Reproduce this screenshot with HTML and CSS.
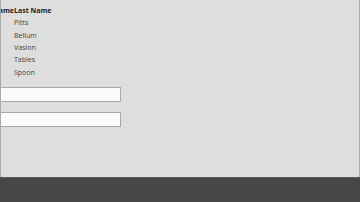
FILE: index.html
```html
<!DOCTYPE html>
<html>
<head>
<meta charset="utf-8">
<link rel="stylesheet" href="styles.css">
</head>
<body>
<div class="app">
  <div class="content">
    <div class="grid-wrap">
      <table class="grid">
        <thead>
          <tr><th class="c1">First Name</th><th class="c2">Last Name</th></tr>
        </thead>
        <tbody>
          <tr><td class="c1"></td><td class="c2">Pitts</td></tr>
          <tr><td class="c1"></td><td class="c2">Bellum</td></tr>
          <tr><td class="c1"></td><td class="c2">Vasion</td></tr>
          <tr><td class="c1"></td><td class="c2">Tables</td></tr>
          <tr><td class="c1"></td><td class="c2">Spoon</td></tr>
        </tbody>
      </table>
    </div>
    <div class="fields">
      <input class="field" type="text">
      <input class="field" type="text">
    </div>
  </div>
  <div class="bottom"></div>
</div>
</body>
</html>
```

FILE: styles.css
```css
html, body {
  margin: 0;
  padding: 0;
}
body {
  width: 360px;
  height: 202px;
  overflow: hidden;
  background: #dcdcdc;
  font-family: "Open Sans", "Noto Sans", sans-serif;
}
.app {
  display: flex;
  flex-direction: column;
  height: 202px;
}
.content {
  height: 177px;
  box-sizing: border-box;
  border-left: 1px solid #a9a9a9;
  border-right: 1px solid #a9a9a9;
  background: #dedede;
  overflow: hidden;
}
.grid-wrap {
  overflow: hidden;
  padding-top: 5px;
}
.grid {
  border-collapse: collapse;
  margin-left: -40px;
  font-size: 7px;
  color: #333;
}
.grid th {
  font-weight: 700;
  padding: 0;
  height: 12px;
  line-height: 12px;
  white-space: nowrap;
  color: #222;
}
.grid th.c1 { text-align: right; }
.grid th.c2 { text-align: left; }
.grid td {
  padding: 0;
  height: 12.4px;
  line-height: 12px;
  color: #444;
}
.grid .c1 { width: 53px; }
.fields {
  display: flex;
  flex-direction: column;
  gap: 10px;
  margin-top: 8px;
  margin-left: -1px;
}
.field {
  width: 121px;
  height: 15px;
  box-sizing: border-box;
  margin: 0;
  border: 1px solid #a8a8a8;
  background: #fbfbfb;
  padding: 0;
  outline: none;
}
.bottom {
  flex: 1;
  background: #474747;
  border-top: 1px solid #5a5a5a;
}
```
